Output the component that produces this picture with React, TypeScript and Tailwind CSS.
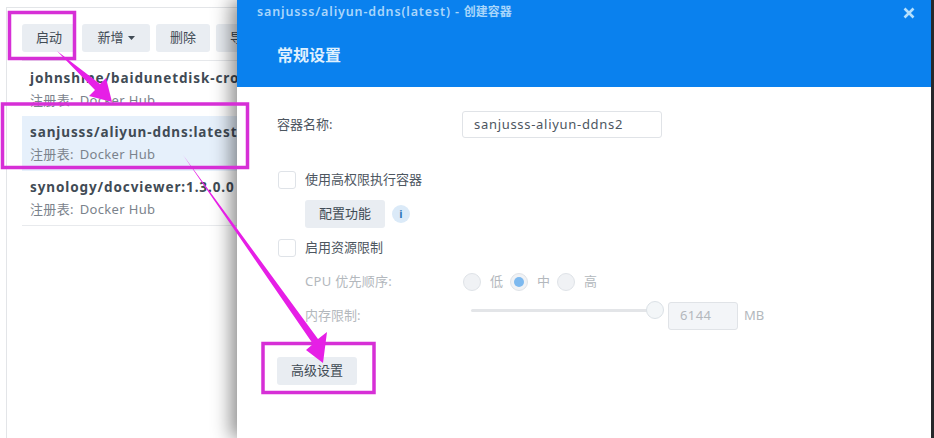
const font = { fontFamily: '"Noto Sans", "Noto Sans CJK SC", sans-serif' };

function Btn({ children, className = "" }: { children: React.ReactNode; className?: string }) {
  return (
    <div className={"h-7 shrink-0 flex items-center justify-center rounded-[3px] bg-[#e9edf2] text-[13px] text-[#414b55] " + className}>
      {children}
    </div>
  );
}

function Row({ name, selected = false, last = false, first = false }: { name: string; selected?: boolean; last?: boolean; first?: boolean }) {
  return (
    <div className={"h-[55px] pl-2 overflow-hidden whitespace-nowrap border-b " + (first ? "pt-[7px] " : "pt-[6px] ") + (selected ? "bg-[#e6f0fb] border-[#e6f0fb]" : last ? "border-[#e8eaed]" : "border-transparent")}>
      <div className="text-[13.5px] leading-[20px] font-bold text-[#414b55] tracking-[0.9px]">{name}</div>
      <div className="mt-[2px] text-[13px] leading-[20px] text-[#7b838c] tracking-[0.35px]">注册表: <span className="ml-[2px]">Docker Hub</span></div>
    </div>
  );
}

function Check() {
  return <div className="w-[18px] h-[18px] rounded-[3px] border border-[#dfe3e8] bg-white shrink-0" />;
}

function Radio({ on = false }: { on?: boolean }) {
  return (
    <div className="w-[18px] h-[18px] rounded-full border border-[#dfe3e8] bg-[#f0f2f5] flex items-center justify-center shrink-0">
      {on && <div className="w-[10px] h-[10px] rounded-full bg-[#7db9ef]" />}
    </div>
  );
}

export default function App() {
  return (
    <div style={font} className="relative w-[934px] h-[438px] overflow-hidden bg-white flex">
      <div className="w-[237px] shrink-0 pl-[6px] pt-[7px]">
        <div className="h-[431px] border-l border-t border-[#e3e5e8] pl-[15px] overflow-hidden">
          <div className="flex pt-[16px] h-[53px] border-b border-[#e6e8eb] w-[300px]">
            <Btn className="w-[54px] mr-[6px]">启动</Btn>
            <Btn className="w-[68px] mr-[6px]">
              新增
              <svg width="7" height="4" viewBox="0 0 7 4" className="ml-[4px]"><path d="M0 0h7L3.500 4z" fill="#414b55" /></svg>
            </Btn>
            <Btn className="w-[54px] mr-[6px]">删除</Btn>
            <Btn className="w-[54px]">导出</Btn>
          </div>
          <Row name="johnshine/baidunetdisk-crossover" first />
          <Row name="sanjusss/aliyun-ddns:latest" selected />
          <Row name="synology/docviewer:1.3.0.0" last />
        </div>
      </div>

      <div className="relative z-10 w-[694px] h-full bg-white shadow-[-6px_0_18px_rgba(0,0,0,0.45)] flex flex-col">
        <div className="h-[87px] bg-[#0a81ee] pl-[20px] pr-[16px] shrink-0">
          <div className="flex items-center justify-between h-[25px]">
            <span className="text-[12.5px] font-semibold text-[#a9d6fb] tracking-[0.85px] whitespace-nowrap">sanjusss/aliyun-ddns(latest) - <span className="text-[12px] tracking-normal">创建容器</span></span>
            <svg width="12" height="12" viewBox="0 0 12 12"><path d="M1.500 1.500l9 9M10.500 1.500l-9 9" stroke="#b5e0fd" strokeWidth="2.600" /></svg>
          </div>
          <div className="mt-[18px] ml-[20px] text-[16px] leading-[24px] font-bold text-[#dff0fe]">常规设置</div>
        </div>

        <div className="pl-[40px] pt-[24px] flex flex-col text-[#4d565f] text-[13px]">
          <div className="flex items-center h-[27px]">
            <span className="w-[185px] pt-[1px]">容器名称:</span>
            <div className="w-[200px] h-[27px] rounded-[3px] border border-[#e0e3e7] pl-[11px] flex items-center text-[13px] tracking-[0.7px]">sanjusss-aliyun-ddns2</div>
          </div>
          <div className="flex items-center gap-[9px] h-[18px] mt-[33px] ml-[1px]">
            <Check />
            <span>使用高权限执行容器</span>
          </div>
          <div className="flex items-center mt-[11px] ml-[28px] gap-[7px]">
            <Btn className="w-[80px]">配置功能</Btn>
            <div className="w-[18px] h-[18px] rounded-full bg-[#dbeaf8] flex items-center justify-center text-[11px] font-bold text-[#2f78b8]">i</div>
          </div>
          <div className="flex items-center gap-[9px] h-[18px] mt-[11px] ml-[1px]">
            <Check />
            <span>启用资源限制</span>
          </div>
          <div className="flex items-center h-[18px] mt-[16px] ml-[28px] text-[#b3b8bd]">
            <span className="w-[158px] tracking-[0.3px]">CPU 优先顺序:</span>
            <Radio /><span className="ml-[9px] w-[20px]">低</span>
            <Radio on /><span className="ml-[9px] w-[20px]">中</span>
            <Radio /><span className="ml-[9px]">高</span>
          </div>
          <div className="flex items-center h-[28px] mt-[11px] ml-[28px] text-[#b3b8bd]">
            <span className="w-[166px]">内存限制:</span>
            <div className="relative w-[184px] h-[3px] bg-[#e3e5e8] rounded-full -translate-y-[6px]">
              <div className="absolute right-[-9px] top-[-8px] w-[18px] h-[18px] rounded-full border border-[#dbe1e6] bg-[#f3f6f8]" />
            </div>
            <div className="ml-[13px] w-[70px] h-[28px] rounded-[3px] border border-[#e0e3e7] bg-[#f3f5f8] pl-[11px] flex items-center text-[13px] tracking-[0.4px]">6144</div>
            <span className="ml-[6px]">MB</span>
          </div>
          <Btn className="w-[80px] mt-[27px]">高级设置</Btn>
        </div>
      </div>
      <div className="relative z-10 w-[3px] h-full bg-[#26282b] shrink-0" />

      <svg className="absolute inset-0 z-20 pointer-events-none" width="934" height="438" viewBox="0 0 934 438">
        <g fill="none" stroke="#d62fd6" strokeWidth="3.500">
          <rect x="9.500" y="12.500" width="65" height="46" />
          <rect x="2.500" y="104" width="245" height="63.500" />
          <rect x="263" y="343.500" width="111" height="49" />
        </g>
        <path d="M57 51 L100 84 L106 78 L112 102 L89 96 L95 90 Z" fill="#e61fe6" />
        <path d="M183 155 L318 339 L327 332 L323 363 L306 350 L313 344 Z" fill="#e61fe6" />
      </svg>
    </div>
  );
}
